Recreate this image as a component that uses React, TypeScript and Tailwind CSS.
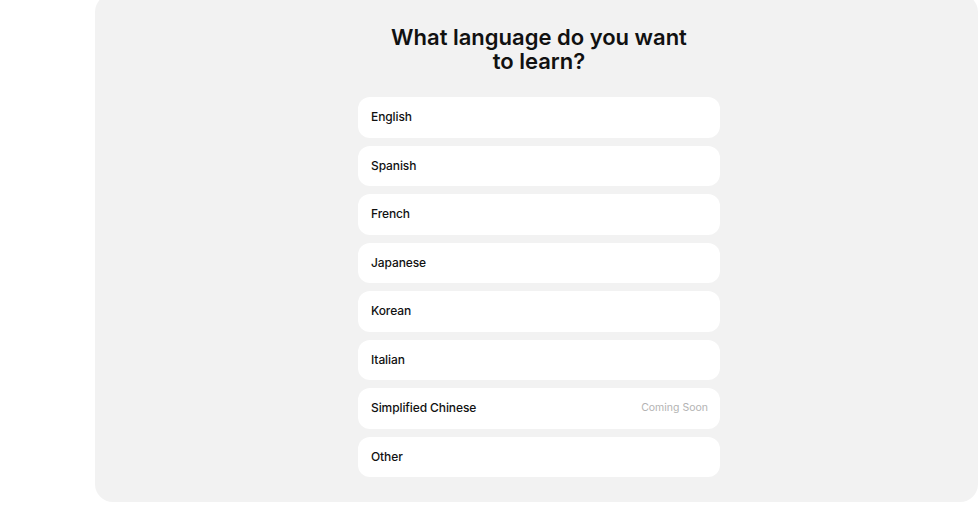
import React from 'react';

const LANGUAGES: [string, string?][] = [
  ['English'],
  ['Spanish'],
  ['French'],
  ['Japanese'],
  ['Korean'],
  ['Italian'],
  ['Simplified Chinese', 'Coming Soon'],
  ['Other'],
];

function LanguageOption({ label, note }: { label: string; note?: string }) {
  return (
    <button
      type="button"
      className="flex h-[40.5px] w-full items-center justify-between rounded-[12px] bg-white pl-[13px] pr-[12px] text-left"
    >
      <span className="text-[12px] font-medium tracking-[-0.1px] text-[#111111]">{label}</span>
      {note && <span className="text-[10.5px] text-[#b3b3b3]">{note}</span>}
    </button>
  );
}

export default function App() {
  return (
    <div className="h-[507px] w-[980px] overflow-hidden bg-white font-['Inter','Liberation_Sans',sans-serif]">
      <div className="ml-[95px] mr-[2px] mt-[-6px] flex h-[508px] flex-col items-center rounded-[18px] bg-[#f2f2f2] pl-[5px] pt-[31px]">
        <h1 className="text-center text-[22px] leading-[24px] font-semibold text-[#111111]">
          What language do you want
          <br />
          to learn?
        </h1>
        <div className="mt-[24px] flex w-[362px] flex-col gap-[8px]">
          {LANGUAGES.map(([label, note]) => (
            <LanguageOption key={label} label={label} note={note} />
          ))}
        </div>
      </div>
    </div>
  );
}
